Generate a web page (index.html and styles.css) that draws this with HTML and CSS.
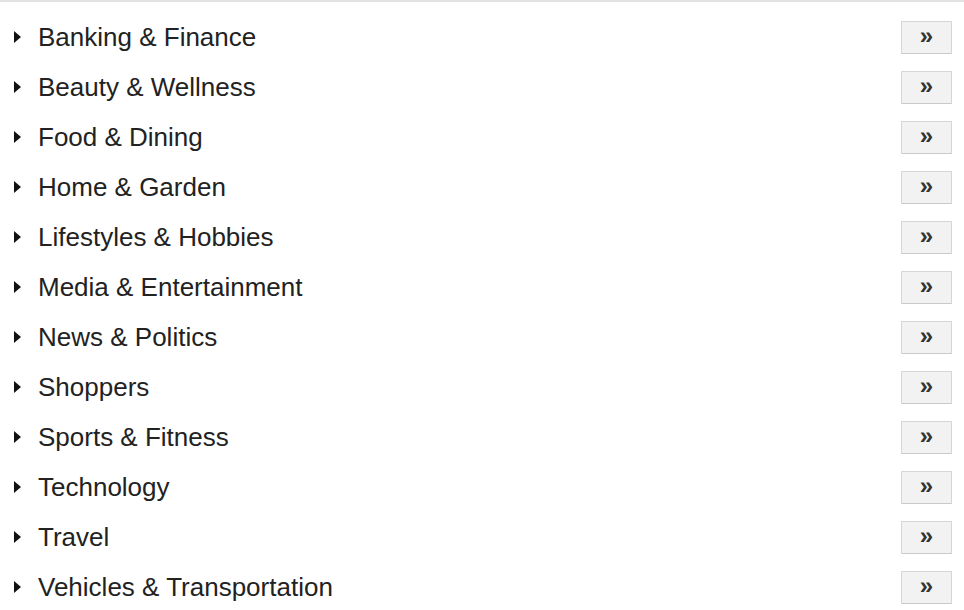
FILE: index.html
```html
<!DOCTYPE html>
<html>
<head>
<meta charset="utf-8">
<link rel="stylesheet" href="styles.css">
</head>
<body>
<ul class="cat-list">
  <li class="cat-row"><span class="caret"></span><span class="cat-name">Banking &amp; Finance</span><button class="go-btn">»</button></li>
  <li class="cat-row"><span class="caret"></span><span class="cat-name">Beauty &amp; Wellness</span><button class="go-btn">»</button></li>
  <li class="cat-row"><span class="caret"></span><span class="cat-name">Food &amp; Dining</span><button class="go-btn">»</button></li>
  <li class="cat-row"><span class="caret"></span><span class="cat-name">Home &amp; Garden</span><button class="go-btn">»</button></li>
  <li class="cat-row"><span class="caret"></span><span class="cat-name">Lifestyles &amp; Hobbies</span><button class="go-btn">»</button></li>
  <li class="cat-row"><span class="caret"></span><span class="cat-name">Media &amp; Entertainment</span><button class="go-btn">»</button></li>
  <li class="cat-row"><span class="caret"></span><span class="cat-name">News &amp; Politics</span><button class="go-btn">»</button></li>
  <li class="cat-row"><span class="caret"></span><span class="cat-name">Shoppers</span><button class="go-btn">»</button></li>
  <li class="cat-row"><span class="caret"></span><span class="cat-name">Sports &amp; Fitness</span><button class="go-btn">»</button></li>
  <li class="cat-row"><span class="caret"></span><span class="cat-name">Technology</span><button class="go-btn">»</button></li>
  <li class="cat-row"><span class="caret"></span><span class="cat-name">Travel</span><button class="go-btn">»</button></li>
  <li class="cat-row"><span class="caret"></span><span class="cat-name">Vehicles &amp; Transportation</span><button class="go-btn">»</button></li>
</ul>
</body>
</html>
```
FILE: styles.css
```css
html, body {
  margin: 0;
  padding: 0;
  background: #fff;
}
body {
  font-family: "Liberation Sans", Arial, Helvetica, sans-serif;
  overflow: hidden;
}
.cat-list {
  list-style: none;
  margin: 0;
  padding: 10px 12px 0 14px;
  border-top: 2px solid #e2e2e2;
}
.cat-row {
  display: flex;
  align-items: center;
  height: 50px;
}
.caret {
  flex: none;
  width: 0;
  height: 0;
  border-top: 6px solid transparent;
  border-bottom: 6px solid transparent;
  border-left: 7px solid #111;
  margin-right: 17px;
}
.cat-name {
  flex: 1;
  font-size: 26px;
  color: #222;
  line-height: 30px;
}
.go-btn {
  width: 51px;
  height: 33px;
  background: #f2f2f2;
  border: 1px solid #d6d6d6;
  border-bottom-color: #cacaca;
  border-radius: 1px;
  font-family: "Liberation Sans", Arial, sans-serif;
  font-weight: bold;
  font-size: 24px;
  color: #333;
  padding: 0 0 3px 0;
  line-height: 1;
}
```
